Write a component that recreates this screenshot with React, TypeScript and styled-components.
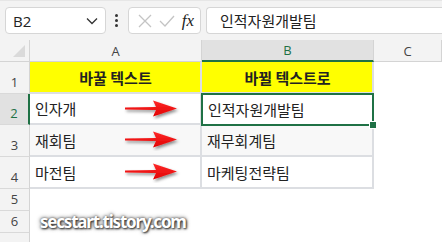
import React from "react";
import styled, { createGlobalStyle } from "styled-components";

const GlobalStyle = createGlobalStyle`
  html, body {
    margin: 0;
    padding: 0;
    background: #ffffff;
    overflow: hidden;
  }
  body {
    font-family: "Noto Sans", "Noto Sans CJK KR", sans-serif;
  }
`;

const KR = `"Noto Sans CJK KR", "Noto Sans", sans-serif`;
const GREEN = "#1f7145";
const GRID = "#dcdee2";

const Page = styled.div`
  position: relative;
  width: 442px;
  height: 242px;
  overflow: hidden;
  background: #ffffff;
`;

const Toolbar = styled.div`
  display: flex;
  align-items: center;
  height: 40px;
  box-sizing: border-box;
  padding: 6px 0 6px 5px;
  background: #f3f3f3;
  border-top: 1px solid #e6e6e6;
`;

const Box = styled.div<{ w?: number; grow?: boolean }>`
  display: flex;
  align-items: center;
  box-sizing: border-box;
  height: 27px;
  width: ${({ w }) => (w ? w + "px" : "auto")};
  flex: ${({ grow }) => (grow ? "1" : "none")};
  background: #ffffff;
  border: 1px solid #d6d6d6;
  border-radius: 4px;
`;

const FormulaBox = styled(Box)`
  margin-left: 5px;
  border-right: none;
  border-radius: 4px 0 0 4px;
`;

const NameText = styled.span`
  flex: 1;
  padding-left: 7px;
  font-family: "Open Sans", "Noto Sans", sans-serif;
  font-size: 15px;
  color: #222;
`;

const Dots = styled.div`
  display: flex;
  flex-direction: column;
  gap: 2px;
  margin: 0 10px 0 9px;
  span {
    width: 3px;
    height: 3px;
    border-radius: 50%;
    background: #333;
  }
`;

const FxGroup = styled.div`
  display: flex;
  align-items: center;
  width: 100%;
  padding: 0 6px 0 9px;
  box-sizing: border-box;
  justify-content: space-between;
`;

const Fx = styled.span`
  font-family: "Liberation Serif", serif;
  font-style: italic;
  font-size: 17px;
  color: #222;
`;

const FormulaText = styled.span`
  padding-left: 13px;
  font-family: ${KR};
  font-size: 15px;
  color: #222;
`;

const Sheet = styled.div`
  display: grid;
  grid-template-columns: 30px 172px 172px 1fr;
  grid-template-rows: 22px 32px 31px 32px 32px 22px 22px 20px;
`;

const ColHead = styled.div<{ active?: boolean }>`
  display: flex;
  align-items: center;
  justify-content: center;
  box-sizing: border-box;
  background: ${({ active }) => (active ? "#e1e1e1" : "#f3f3f3")};
  border-right: 1px solid #d4d4d4;
  border-bottom: ${({ active }) =>
    active ? `2px solid ${GREEN}` : "1px solid #d4d4d4"};
  font-family: "Open Sans", "Noto Sans", sans-serif;
  font-size: 13px;
  color: ${({ active }) => (active ? GREEN : "#444")};
`;

const Corner = styled(ColHead)`
  position: relative;
  &::after {
    content: "";
    position: absolute;
    right: 4px;
    bottom: 4px;
    width: 0;
    height: 0;
    border-left: 12px solid transparent;
    border-bottom: 12px solid #dadada;
  }
`;

const RowHead = styled.div<{ active?: boolean }>`
  display: flex;
  align-items: flex-end;
  justify-content: center;
  padding-bottom: 2px;
  box-sizing: border-box;
  background: ${({ active }) => (active ? "#e1e1e1" : "#f3f3f3")};
  border-bottom: 1px solid #d9d9d9;
  border-right: ${({ active }) =>
    active ? `2px solid ${GREEN}` : "1px solid #d4d4d4"};
  font-family: "Open Sans", "Noto Sans", sans-serif;
  font-size: 13px;
  color: ${({ active }) => (active ? GREEN : "#444")};
`;

const Cell = styled.div<{ head?: boolean; shade?: boolean }>`
  display: flex;
  align-items: center;
  justify-content: ${({ head }) => (head ? "center" : "space-between")};
  box-sizing: border-box;
  padding: 0 4px 0 5px;
  background: ${({ head, shade }) =>
    head ? "#ffff00" : shade ? "#f8f8f8" : "#ffffff"};
  border-right: 2px solid ${GRID};
  border-bottom: 2px solid ${GRID};
  font-family: ${KR};
  font-size: 15px;
  font-weight: ${({ head }) => (head ? 700 : 400)};
  color: #222;
`;

const Selected = styled(Cell)`
  position: relative;
  border: 2px solid ${GREEN};
  margin: -1px 0 -1px -1px;
  padding-left: 5px;
`;

const Handle = styled.div`
  position: absolute;
  right: -5px;
  bottom: -5px;
  width: 6px;
  height: 6px;
  background: ${GREEN};
  border: 1px solid #ffffff;
`;

const Empty = styled.div`
  background: #ffffff;
`;

const Watermark = styled.div`
  position: absolute;
  left: 40px;
  top: 210px;
  font-family: "Noto Sans", sans-serif;
  font-weight: 700;
  font-size: 17px;
  letter-spacing: -1.2px;
  color: #ffffff;
  text-shadow: 1px 1px 2px #333, 0 0 3px #555, 0 0 5px #888;
`;

const Arrow = () => (
  <svg width="60" height="22" viewBox="0 0 60 22" style={{ marginRight: 13 }}>
    <defs>
      <filter id="sh" x="-20%" y="-40%" width="140%" height="180%">
        <feDropShadow dx="1.5" dy="2" stdDeviation="1.6" floodColor="#000" floodOpacity="0.45" />
      </filter>
      <linearGradient id="rg" x1="0" y1="0" x2="0" y2="1">
        <stop offset="0" stopColor="#ff2a2a" />
        <stop offset="1" stopColor="#e00000" />
      </linearGradient>
    </defs>
    <path
      d="M2 9.4 L33 9 L30 2.5 L54 10.5 L30 18.5 L33 12 L2 11.6 Z"
      fill="url(#rg)"
      filter="url(#sh)"
    />
  </svg>
);

const XIcon = () => (
  <svg width="14" height="14" viewBox="0 0 14 14">
    <path d="M1 1 L13 13 M13 1 L1 13" stroke="#c4c4c4" strokeWidth="1.3" fill="none" />
  </svg>
);

const CheckIcon = () => (
  <svg width="16" height="12" viewBox="0 0 16 12">
    <path d="M1 6 L6 11 L15 1" stroke="#c4c4c4" strokeWidth="1.3" fill="none" />
  </svg>
);

const Chevron = () => (
  <svg width="12" height="8" viewBox="0 0 12 8" style={{ marginRight: 7 }}>
    <path d="M1 1.5 L6 6.5 L11 1.5" stroke="#333" strokeWidth="1.3" fill="none" />
  </svg>
);

const rows = [
  { from: "인자개", to: "인적자원개발팀" },
  { from: "재회팀", to: "재무회계팀" },
  { from: "마전팀", to: "마케팅전략팀" },
];

export default function App() {
  return (
    <Page>
      <GlobalStyle />
      <Toolbar>
        <Box w={101}>
          <NameText>B2</NameText>
          <Chevron />
        </Box>
        <Dots>
          <span />
          <span />
          <span />
        </Dots>
        <Box w={73}>
          <FxGroup>
            <XIcon />
            <CheckIcon />
            <Fx>fx</Fx>
          </FxGroup>
        </Box>
        <FormulaBox grow>
          <FormulaText>인적자원개발팀</FormulaText>
        </FormulaBox>
      </Toolbar>
      <Sheet>
        <Corner />
        <ColHead>A</ColHead>
        <ColHead active>B</ColHead>
        <ColHead>C</ColHead>

        <RowHead>1</RowHead>
        <Cell head>바꿀 텍스트</Cell>
        <Cell head>바뀔 텍스트로</Cell>
        <Empty />

        {rows.map((r, i) => (
          <React.Fragment key={r.from}>
            <RowHead active={i === 0}>{i + 2}</RowHead>
            <Cell shade={i === 1}>
              {r.from}
              <Arrow />
            </Cell>
            {i === 0 ? (
              <Selected>
                {r.to}
                <Handle />
              </Selected>
            ) : (
              <Cell shade={i === 1}>{r.to}</Cell>
            )}
            <Empty />
          </React.Fragment>
        ))}

        <RowHead>5</RowHead>
        <Empty />
        <Empty />
        <Empty />
        <RowHead>6</RowHead>
        <Empty />
        <Empty />
        <Empty />
        <RowHead />
        <Empty />
        <Empty />
        <Empty />
      </Sheet>
      <Watermark>secstart.tistory.com</Watermark>
    </Page>
  );
}
